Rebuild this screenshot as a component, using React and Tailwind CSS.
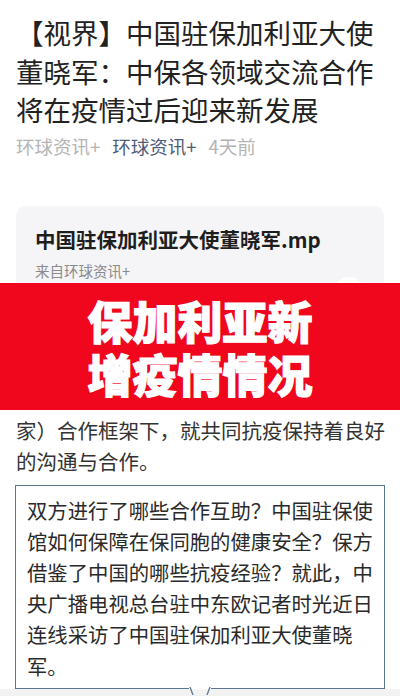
const FONT = { fontFamily: '"Noto Sans CJK SC", "Noto Sans", sans-serif' }

const TITLE = ['【视界】中国驻保加利亚大使', '董晓军：中保各领域交流合作', '将在疫情过后迎来新发展']
const PARA = ['家）合作框架下，就共同抗疫保持着良好', '的沟通与合作。']
const QUOTE = [
  '双方进行了哪些合作互助？中国驻保使',
  '馆如何保障在保同胞的健康安全？保方',
  '借鉴了中国的哪些抗疫经验？就此，中',
  '央广播电视总台驻中东欧记者时光近日',
  '连线采访了中国驻保加利亚大使董晓',
  '军。',
]

function Meta() {
  return (
    <div className="mt-[5px] flex h-[24px] items-center gap-[12px] text-[18.5px] leading-[24px]">
      <span className="text-[#b4b4b4]">环球资讯+</span>
      <span className="text-[#4e5d78]">环球资讯+</span>
      <span className="text-[#b4b4b4]">4天前</span>
    </div>
  )
}

function VideoCard() {
  return (
    <div className="relative mx-4 mt-[48px] h-[77px] overflow-hidden rounded-t-[10px] bg-[#f5f5f7] pl-[19px] pt-[19px]">
      <div className="text-[20.5px] font-bold leading-[28px] text-[#1e1e1e] whitespace-nowrap">中国驻保加利亚大使董晓军.mp</div>
      <div className="mt-[8px] text-[14.5px] leading-[20px] text-[#8a8a8a]">来自环球资讯+</div>
      <div className="absolute left-[318px] top-[71px] h-[30px] w-[30px] rounded-full bg-white" />
    </div>
  )
}

function Banner() {
  return (
    <div className="flex h-[127px] flex-col items-center bg-[#f0061d] pt-[11px] text-[45px] font-black leading-[53px] text-white [-webkit-text-stroke:1.2px_white]">
      <div className="h-[53px]">保加利亚新</div>
      <div className="h-[53px]">增疫情情况</div>
    </div>
  )
}

function Quote() {
  return (
    <div className="relative mx-[15px] mt-[8px] border-[1.5px] border-[#5b7590] bg-white pb-[6px] pl-[11px] pt-[9px] text-[20.35px] leading-[31.2px] text-[#2a2a2a]">
      {QUOTE.map((l) => (
        <div key={l} className="whitespace-nowrap">{l}</div>
      ))}
      <svg className="absolute bottom-[-7px] left-[172px]" width="24" height="8" viewBox="0 0 24 8">
        <path d="M1 1 L23 1" stroke="white" strokeWidth="3" />
        <path d="M2 0 L5 8 M22 0 L19 8" stroke="#5b7590" strokeWidth="1.3" fill="none" />
      </svg>
    </div>
  )
}

export default function App() {
  return (
    <div className="h-[696px] w-[400px] overflow-hidden bg-white" style={FONT}>
      <div className="px-4 pt-[13px]">
        <div className="text-[27.5px] leading-[38.5px] text-[#222]">
          {TITLE.map((l) => (
            <div key={l} className="whitespace-nowrap">{l}</div>
          ))}
        </div>
        <Meta />
      </div>
      <VideoCard />
      <Banner />
      <div className="mt-[5px] px-4 text-[20.5px] leading-[31px] text-[#333]">
        {PARA.map((l) => (
          <div key={l} className="whitespace-nowrap">{l}</div>
        ))}
      </div>
      <Quote />
      <div className="h-[10px] bg-[#f2f2f2]" />
    </div>
  )
}
